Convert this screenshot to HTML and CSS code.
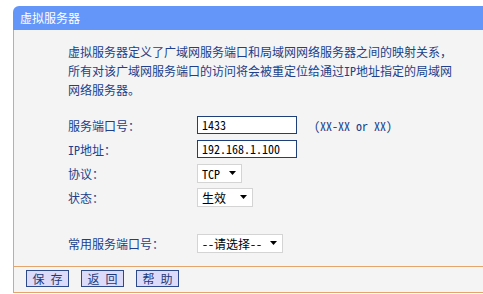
FILE: index.html
```html
<!DOCTYPE html>
<html lang="zh-CN">
<head>
<meta charset="utf-8">
<title>虚拟服务器</title>
<link rel="stylesheet" href="styles.css">
</head>
<body>
<div class="panel">
  <div class="head">虚拟服务器</div>
  <div class="body">
    <p class="desc">虚拟服务器定义了广域网服务端口和局域网网络服务器之间的映射关系，<br>所有对该广域网服务端口的访问将会被重定位给通过IP地址指定的局域网<br>网络服务器。</p>
    <div class="form">
      <div class="row">
        <span class="label">服务端口号：</span>
        <div class="input">1433</div>
        <span class="hint">(XX-XX or XX)</span>
      </div>
      <div class="row">
        <span class="label">IP地址：</span>
        <div class="input">192.168.1.100</div>
      </div>
      <div class="row">
        <span class="label">协议：</span>
        <div class="select w45"><span>TCP</span><svg class="arrow" width="7" height="4" viewBox="0 0 7 4"><path d="M0 0H7L3.5 4Z"/></svg></div>
      </div>
      <div class="row">
        <span class="label">状态：</span>
        <div class="select w56"><span>生效</span><svg class="arrow" width="7" height="4" viewBox="0 0 7 4"><path d="M0 0H7L3.5 4Z"/></svg></div>
      </div>
    </div>
    <div class="row common">
      <span class="label">常用服务端口号：</span>
      <div class="select w86"><span>--请选择--</span><svg class="arrow" width="7" height="4" viewBox="0 0 7 4"><path d="M0 0H7L3.5 4Z"/></svg></div>
    </div>
  </div>
  <div class="foot">
    <button class="btn">保 存</button>
    <button class="btn">返 回</button>
    <button class="btn">帮 助</button>
  </div>
</div>
</body>
</html>
```

FILE: styles.css
```css
body {
  margin: 0;
  background: #ffffff;
  font-family: "Noto Sans Mono CJK SC", "Noto Sans CJK SC", sans-serif;
  font-size: 12px;
}

.panel {
  margin: 6px 0 0 13px;
}

.head {
  height: 24px;
  line-height: 24px;
  background: #6496fa;
  color: #ffffff;
  border-top-left-radius: 6px;
  padding-left: 7px;
  font-size: 12px;
}

.body {
  background: #f4f4f4;
  border-left: 1px solid #e3a56b;
  padding: 12px 0 11px 54px;
}

.desc {
  margin: 0;
  line-height: 19px;
  color: #20408a;
  white-space: nowrap;
}

.form {
  margin-top: 14px;
}

.row {
  display: flex;
  align-items: center;
  height: 24px;
}

.common {
  margin-top: 22px;
}

.label {
  width: 129px;
  flex: none;
  color: #20408a;
}

.input {
  box-sizing: border-box;
  width: 100px;
  height: 18px;
  border: 1px solid #1f3f7a;
  background: #ffffff;
  padding-left: 4px;
  line-height: 16px;
  color: #000000;
}

.hint {
  margin-left: 17px;
  color: #20408a;
}

.select {
  box-sizing: border-box;
  height: 19px;
  border: 1px solid #d4d4d4;
  background: #ffffff;
  display: flex;
  align-items: center;
  justify-content: space-between;
  padding: 0 5px 0 4px;
  color: #000000;
  line-height: 17px;
}

.w45 { width: 45px; }
.w56 { width: 56px; }
.w86 { width: 86px; }

.arrow {
  display: block;
  fill: #000000;
}

.foot {
  height: 25px;
  background: #f4f4f4;
  border-left: 1px solid #e3a56b;
  border-top: 1px solid #e3a56b;
  border-bottom: 1px solid #e3a56b;
  display: flex;
  align-items: flex-start;
  gap: 12px;
  padding: 3px 0 0 12px;
  box-sizing: content-box;
  height: 22px;
}

.btn {
  box-sizing: border-box;
  width: 43px;
  height: 17px;
  padding: 0;
  margin: 0;
  border: 1px solid #2c4a8a;
  background: #dcdcfa;
  color: #1e3a78;
  font-family: inherit;
  font-size: 12px;
  line-height: 15px;
}
```
